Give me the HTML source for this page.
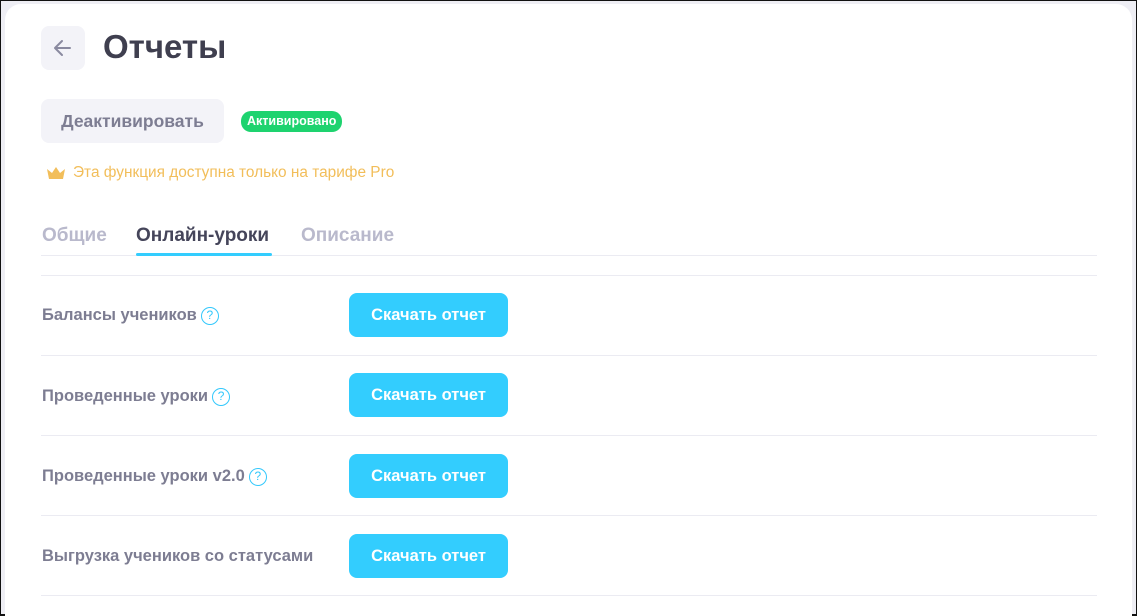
<!DOCTYPE html>
<html><head><meta charset="utf-8"><style>
*{box-sizing:border-box;margin:0;padding:0}
html,body{width:1137px;height:616px;overflow:hidden}
body{background:#eeeef4;font-family:"Liberation Sans","DejaVu Sans",sans-serif;position:relative;border:1px solid #111;border-bottom:2px solid #111}
.card{position:absolute;left:4px;top:3px;width:1127px;height:640px;background:#fff;border-radius:16px}
.abs{position:absolute}
.back{left:36px;top:22px;width:44px;height:44px;background:#f3f3f8;border-radius:8px}
.deact{left:36px;top:95px;width:183px;height:44px;background:#f3f3f8;border-radius:8px;color:#7d7d92;font-weight:bold;font-size:17.5px;line-height:44px;text-align:center}
.badge{left:236px;top:107px;height:21px;padding:0 6px;background:#1ed36f;color:#fff;font-weight:bold;font-size:12.5px;line-height:21px;border-radius:10px}
.pro{left:68px;top:160px;font-size:15.4px;color:#f2be5a}
.tab{top:221px;font-size:19px;font-weight:bold;color:#b9b9cc}
.line{left:36px;width:1056px;height:1px;background:#ebebf2}
.lbl{left:37px;font-size:16.5px;font-weight:bold;color:#7d7d92}
.q{display:inline-block;width:18px;height:18px;border:1.5px solid #33c8fc;border-radius:50%;color:#33c8fc;font-size:12px;line-height:15px;text-align:center;vertical-align:1px;margin-left:4px;font-weight:normal}
.btn{left:344px;width:159px;height:44px;background:#33cdfe;color:#fff;border-radius:8px;font-weight:bold;font-size:16.5px;line-height:44px;text-align:center}
</style></head><body>
<div class="card">
<div class="abs back"><svg width="44" height="44" viewBox="0 0 44 44"><path d="M29 22H15M21 15l-7 7 7 7" stroke="#8a8aa0" stroke-width="2" fill="none" stroke-linecap="round" stroke-linejoin="round"/></svg></div>
<div class="abs" style="left:98px;top:24px"><h1 style="font-size:33px;color:#3f3f4f">Отчеты</h1></div>
<div class="abs deact">Деактивировать</div>
<div class="abs badge">Активировано</div>
<svg class="abs" style="left:40px;top:161px" width="22" height="16" viewBox="0 0 22 16"><path d="M2 4l5 4 4-6 4 6 5-4-2 10H4z" fill="#f2be5a"/></svg>
<div class="abs pro">Эта функция доступна только на тарифе Pro</div>
<div class="abs tab" style="left:37px">Общие</div>
<div class="abs tab" style="left:131px;color:#45455a">Онлайн-уроки</div>
<div class="abs tab" style="left:296px">Описание</div>
<div class="abs line" style="top:251px"></div>
<div class="abs" style="left:131px;top:249px;width:136px;height:3px;background:#33cdfe;border-radius:2px"></div>
<div class="abs line" style="top:271px"></div>
<div class="abs lbl" style="top:302px">Балансы учеников<span class="q">?</span></div>
<div class="abs btn" style="top:289px">Скачать отчет</div>
<div class="abs line" style="top:351px"></div>
<div class="abs lbl" style="top:383px">Проведенные уроки<span class="q">?</span></div>
<div class="abs btn" style="top:369px">Скачать отчет</div>
<div class="abs line" style="top:431px"></div>
<div class="abs lbl" style="top:463px">Проведенные уроки v2.0<span class="q">?</span></div>
<div class="abs btn" style="top:450px">Скачать отчет</div>
<div class="abs line" style="top:511px"></div>
<div class="abs lbl" style="top:543px">Выгрузка учеников со статусами</div>
<div class="abs btn" style="top:530px">Скачать отчет</div>
<div class="abs line" style="top:591px"></div>
</div>
</body></html>
